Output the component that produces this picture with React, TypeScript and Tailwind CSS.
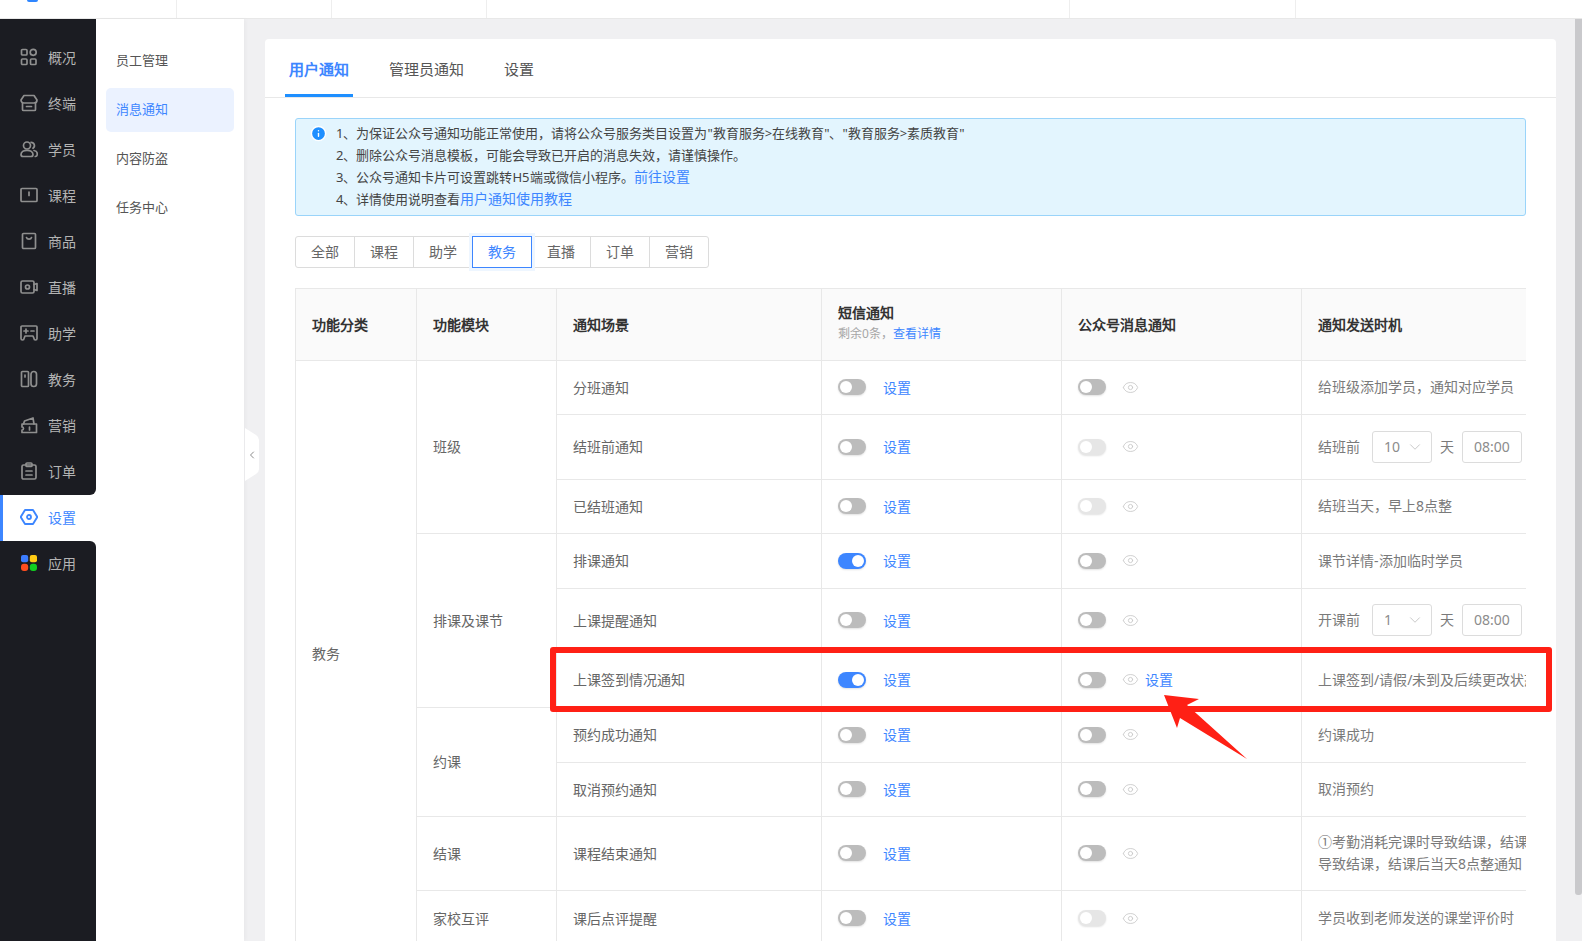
import type { ReactNode } from "react";
import { ChevronDown, ChevronLeft, Eye, Info } from "lucide-react";

const stroke = {
  fill: "none",
  stroke: "#8f8f8f",
  strokeWidth: 1.7,
  strokeLinejoin: "round" as const,
  strokeLinecap: "round" as const,
};

function Glyph({ children }: { children: ReactNode }) {
  return (
    <svg viewBox="0 0 18 18" className="w-[18px] h-[18px] shrink-0">
      {children}
    </svg>
  );
}

const menuTop: { label: string; icon: ReactNode }[] = [
  {
    label: "概况",
    icon: (
      <g {...stroke}>
        <rect x="1.5" y="1.5" width="5.5" height="5.5" rx="1" />
        <circle cx="13.2" cy="4.3" r="3" />
        <rect x="1.5" y="11" width="5.5" height="5.5" rx="1" />
        <rect x="10.5" y="11" width="5.5" height="5.5" rx="1" />
      </g>
    ),
  },
  {
    label: "终端",
    icon: (
      <g {...stroke}>
        <path d="M4 1.5h10l3 4.5c0 1.8-1.2 3-3 3H4C2.200 9 1 7.800 1 6z" />
        <path d="M2.500 9v6.500a1 1 0 0 0 1 1h11a1 1 0 0 0 1-1V9" />
        <path d="M6.500 12.500h5" />
      </g>
    ),
  },
  {
    label: "学员",
    icon: (
      <g {...stroke}>
        <circle cx="7" cy="5.500" r="3.500" />
        <path d="M11 2.300a3.300 3.300 0 0 1 2 6" />
        <path d="M1 14.500c0-2.500 2.500-4.200 6-4.200s6 1.700 6 4.200c0 1.500-.8 2-2 2H3c-1.200 0-2-.5-2-2z" />
        <path d="M14 10.500c2 .3 3.300 1.700 3.300 3.500 0 1.500-.8 2.300-2 2.500" />
      </g>
    ),
  },
  {
    label: "课程",
    icon: (
      <g {...stroke}>
        <path d="M2 2.500h14a1 1 0 0 1 1 1v11a1 1 0 0 1-1 1H2a1 1 0 0 1-1-1v-11a1 1 0 0 1 1-1z" />
        <path d="M9 6v3.500" />
      </g>
    ),
  },
  {
    label: "商品",
    icon: (
      <g {...stroke}>
        <rect x="2.500" y="1.500" width="13" height="15" rx="1" />
        <path d="M6.500 5.500c.6 2.200 4.400 2.200 5 0" />
      </g>
    ),
  },
  {
    label: "直播",
    icon: (
      <g {...stroke}>
        <rect x="1" y="3" width="13" height="12" rx="1.500" />
        <circle cx="7.500" cy="9" r="2" />
        <path d="M14 6.500l3-1v7l-3-1" />
      </g>
    ),
  },
  {
    label: "助学",
    icon: (
      <g {...stroke}>
        <path d="M2 2h14a1 1 0 0 1 1 1v11.500a1.500 1.500 0 0 1-3 0L13 12H5l-1 2.500a1.500 1.500 0 0 1-3 0V3a1 1 0 0 1 1-1z" />
        <path d="M4 7h4M6 5v4M11 7h3" />
      </g>
    ),
  },
  {
    label: "教务",
    icon: (
      <g {...stroke}>
        <rect x="1.500" y="1.500" width="7" height="15" rx="1" />
        <rect x="11" y="1.500" width="5.500" height="15" rx="2.700" />
        <path d="M5 5v2" />
      </g>
    ),
  },
  {
    label: "营销",
    icon: (
      <g {...stroke}>
        <path d="M2 8h14.500v8.500H2V14c1 0 1.500-.7 1.500-1.500S3 11 2 11z" />
        <path d="M3.500 8l1-3 8.500-3 1 6" />
        <path d="M9.500 11v3" />
      </g>
    ),
  },
  {
    label: "订单",
    icon: (
      <g {...stroke}>
        <rect x="2" y="3" width="14" height="14" rx="1.500" />
        <rect x="6" y="1" width="6" height="3.500" rx="1" />
        <path d="M6 9h6M6 13h6" />
      </g>
    ),
  },
];

const subMenu = ["员工管理", "消息通知", "内容防盗", "任务中心"];
const filters = ["全部", "课程", "助学", "教务", "直播", "订单", "营销"];

type Row = {
  scene: string;
  height: string;
  sms?: boolean;
  wx?: "off" | "disabled";
  wxLink?: boolean;
  timing: ReactNode;
  module?: { name: string; span: number };
};

function Delay({ label, days }: { label: string; days: string }) {
  return (
    <div className="flex items-center">
      <span>{label}</span>
      <div className="ml-[12px] flex h-[32px] w-[60px] items-center justify-between rounded-[3px] border border-[#dcdcdc] pl-[11px] pr-[7px] text-[#8c8c8c]">
        {days}
        <ChevronDown size={18} strokeWidth={1} color="#b5b5b5" />
      </div>
      <span className="ml-[8px]">天</span>
      <div className="ml-[8px] flex h-[32px] w-[60px] items-center justify-center rounded-[3px] border border-[#dcdcdc] text-[#8c8c8c]">
        08:00
      </div>
    </div>
  );
}

const rows: Row[] = [
  { scene: "分班通知", height: "h-[54px]", timing: "给班级添加学员，通知对应学员", module: { name: "班级", span: 3 } },
  { scene: "结班前通知", height: "h-[65px]", wx: "disabled", timing: <Delay label="结班前" days="10" /> },
  { scene: "已结班通知", height: "h-[54px]", wx: "disabled", timing: "结班当天，早上8点整" },
  { scene: "排课通知", height: "h-[55px]", sms: true, timing: "课节详情-添加临时学员", module: { name: "排课及课节", span: 3 } },
  { scene: "上课提醒通知", height: "h-[64px]", timing: <Delay label="开课前" days="1" /> },
  { scene: "上课签到情况通知", height: "h-[55px]", sms: true, wxLink: true, timing: "上课签到/请假/未到及后续更改状态时通知" },
  { scene: "预约成功通知", height: "h-[55px]", timing: "约课成功", module: { name: "约课", span: 2 } },
  { scene: "取消预约通知", height: "h-[54px]", timing: "取消预约" },
  {
    scene: "课程结束通知",
    height: "h-[74px]",
    timing: (
      <>
        ①考勤消耗完课时导致结课，结课后当天8点整通知
        <br />
        导致结课，结课后当天8点整通知
      </>
    ),
    module: { name: "结课", span: 1 },
  },
  { scene: "课后点评提醒", height: "h-[56px]", wx: "disabled", timing: "学员收到老师发送的课堂评价时", module: { name: "家校互评", span: 1 } },
];

function Toggle({ on, disabled }: { on?: boolean; disabled?: boolean }) {
  const track = on ? "bg-[#3d86ff] justify-end" : disabled ? "bg-[#e6e6e6]" : "bg-[#bcbcbc]";
  return (
    <span className={`flex h-[16px] w-[28px] shrink-0 items-center rounded-full px-[2px] shadow-[0_1px_2px_rgba(0,0,0,0.12)] ${track}`}>
      <span className="h-[12px] w-[12px] rounded-full bg-white" />
    </span>
  );
}

const cell = "border border-[#e8e8e8] pb-[1px] pl-[16px] align-middle";

export default function App() {
  return (
    <div
      lang="zh-CN"
      className="relative flex h-[941px] w-[1582px] flex-col overflow-hidden bg-white text-[14px] [font-family:'Liberation_Sans','Noto_Sans_CJK_SC',sans-serif]"
    >
      <header className="flex h-[19px] shrink-0 border-b border-[#e8e8e8] bg-white">
        <div className="w-[177px] border-r border-[#eeeeee]">
          <div className="ml-[27px] h-[2px] w-[11px] rounded-b-sm bg-[#2f86ff]" />
        </div>
        <div className="w-[155px] border-r border-[#eeeeee]" />
        <div className="w-[155px] border-r border-[#eeeeee]" />
        <div className="w-[583px] border-r border-[#eeeeee]" />
        <div className="w-[226px] border-r border-[#eeeeee]" />
      </header>

      <div className="flex min-h-0 flex-1">
        <aside className="flex w-[96px] shrink-0 flex-col bg-white">
          <nav className="rounded-br-[6px] bg-[#1b1c22] pb-[1px] pt-[15px]">
            {menuTop.map((m) => (
              <div key={m.label} className="flex h-[46px] items-center gap-[10px] pl-[20px] text-[#b4b4b4]">
                <Glyph>{m.icon}</Glyph>
                {m.label}
              </div>
            ))}
          </nav>
          <div className="flex h-[46px] items-center gap-[10px] border-l-[3px] border-[#3d86ff] pb-[2px] pl-[17px] text-[#3d86ff]">
            <Glyph>
              <path d="M5 2h8l4.300 7-4.300 7H5L.7 9z" fill="none" stroke="#3d86ff" strokeWidth="1.900" strokeLinejoin="round" />
              <circle cx="9" cy="9" r="2" fill="none" stroke="#3d86ff" strokeWidth="1.800" />
            </Glyph>
            设置
          </div>
          <div className="flex-1 rounded-tr-[6px] bg-[#1b1c22]">
            <div className="flex h-[44px] items-center gap-[10px] pl-[20px] text-[#b4b4b4]">
              <Glyph>
                <rect x="1" y="1" width="7.200" height="7.200" rx="2" fill="#3b7cff" />
                <rect x="9.800" y="1" width="7.200" height="7.200" rx="2" fill="#ffcb14" />
                <rect x="1" y="9.800" width="7.200" height="7.200" rx="3" fill="#ff4d1f" />
                <rect x="9.800" y="9.800" width="7.200" height="7.200" rx="3" fill="#10ce20" />
              </Glyph>
              应用
            </div>
          </div>
        </aside>

        <div className="z-10 flex w-[148px] shrink-0 flex-col gap-[5px] bg-white pl-[10px] pr-[10px] pt-[20px] text-[13px] text-[#555555] shadow-[2px_0_4px_rgba(0,0,0,0.03)]">
          {subMenu.map((s) => (
            <div
              key={s}
              className={`flex h-[44px] items-center rounded-[5px] pl-[10px] ${s === "消息通知" ? "bg-[#ebf2ff] text-[#3d86ff]" : ""}`}
            >
              {s}
            </div>
          ))}
        </div>

        <main className="flex min-w-0 flex-1 bg-[#f0f0f2]">
          <div className="min-w-0 flex-1 overflow-hidden pl-[21px] pr-[19px] pt-[20px]">
            <section className="rounded-t-[4px] bg-white">
              <div className="flex h-[59px] gap-[32px] border-b border-[#e8e8e8] pl-[20px] text-[15px] text-[#555555]">
                <div className="flex items-center border-b-[3px] border-[#1e8fff] px-[4px] pt-[5px] font-bold text-[#3d86ff]">用户通知</div>
                <div className="flex items-center px-[4px] pt-[2px]">管理员通知</div>
                <div className="flex items-center px-[4px] pt-[2px]">设置</div>
              </div>

              <div className="px-[30px] pt-[20px]">
                <div className="flex h-[98px] gap-[9px] rounded-[3px] border border-[#9ad4fa] bg-[#e3f5fe] pl-[14px] pt-[3px] text-[13px] leading-[22px] text-[#444444]">
                  <Info size={17} fill="#1e8fff" color="#ffffff" className="mt-[3px] shrink-0" />
                  <div>
                    <p>1、为保证公众号通知功能正常使用，请将公众号服务类目设置为"教育服务&gt;在线教育"、"教育服务&gt;素质教育"</p>
                    <p>2、删除公众号消息模板，可能会导致已开启的消息失效，请谨慎操作。</p>
                    <p>
                      3、公众号通知卡片可设置跳转H5端或微信小程序。<span className="text-[14px] text-[#3d86ff]">前往设置</span>
                    </p>
                    <p>
                      4、详情使用说明查看<span className="text-[14px] text-[#3d86ff]">用户通知使用教程</span>
                    </p>
                  </div>
                </div>

                <div className="mt-[20px] flex h-[32px] w-[414px] rounded-[3px] border border-[#dcdcdc] text-[#666666]">
                  {filters.map((f) => (
                    <div
                      key={f}
                      className={
                        f === "教务"
                          ? "z-10 -my-px flex w-[60px] items-center justify-center border border-[#3d86ff] pb-[2px] text-[#3d86ff] shadow-[0_0_0_3px_#eef6ff]"
                          : "flex flex-1 items-center justify-center border-r border-[#dcdcdc] pb-[2px] last:border-r-0"
                      }
                    >
                      {f}
                    </div>
                  ))}
                </div>

                <div className="mt-[20px] overflow-hidden">
                  <table className="w-[1231px] table-fixed border-collapse text-[#666666]">
                    <colgroup>
                      <col className="w-[121px]" />
                      <col className="w-[140px]" />
                      <col className="w-[265px]" />
                      <col className="w-[240px]" />
                      <col className="w-[240px]" />
                      <col className="w-[225px]" />
                    </colgroup>
                    <thead>
                      <tr className="h-[72px] bg-[#fafafa] text-left text-[#333333]">
                        <th className={`${cell} font-semibold`}>功能分类</th>
                        <th className={`${cell} font-semibold`}>功能模块</th>
                        <th className={`${cell} font-semibold`}>通知场景</th>
                        <th className={`${cell} font-semibold`}>
                          <div className="leading-[20px]">短信通知</div>
                          <div className="text-[12px] font-normal leading-[22px] text-[#a6a6a6]">
                            剩余0条，<span className="text-[#3d86ff]">查看详情</span>
                          </div>
                        </th>
                        <th className={`${cell} font-semibold`}>公众号消息通知</th>
                        <th className={`${cell} font-semibold`}>通知发送时机</th>
                      </tr>
                    </thead>
                    <tbody>
                      {rows.map((r, i) => (
                        <tr key={r.scene} className={r.height}>
                          {i === 0 && (
                            <td rowSpan={rows.length} className={cell}>
                              教务
                            </td>
                          )}
                          {r.module && (
                            <td rowSpan={r.module.span} className={cell}>
                              {r.module.name}
                            </td>
                          )}
                          <td className={cell}>{r.scene}</td>
                          <td className={cell}>
                            <div className="flex items-center gap-[17px]">
                              <Toggle on={r.sms} />
                              <span className="text-[#3d86ff]">设置</span>
                            </div>
                          </td>
                          <td className={cell}>
                            <div className="flex items-center">
                              <Toggle disabled={r.wx === "disabled"} />
                              <Eye size={17} strokeWidth={1.2} color="#c8c8c8" className="ml-[16px]" />
                              {r.wxLink && <span className="ml-[6px] text-[#3d86ff]">设置</span>}
                            </div>
                          </td>
                          <td className={`${cell} overflow-hidden whitespace-nowrap leading-[22px] text-[#7a7a7a]`}>{r.timing}</td>
                        </tr>
                      ))}
                    </tbody>
                  </table>
                </div>
              </div>
            </section>
          </div>
          <div className="w-[7px] shrink-0">
            <div className="h-[876px] rounded-b-[3px] bg-[#c9c9cc]" />
          </div>
        </main>
      </div>

      {/* collapse handle */}
      <div className="absolute left-[245px] top-[428px] z-20 flex h-[53px] w-[14px] items-center justify-center">
        <svg viewBox="0 0 14 53" className="absolute inset-0 h-full w-full">
          <path d="M0 0l11 7q3 2 3 5v29q0 3-3 5L0 53z" fill="#ffffff" />
        </svg>
        <ChevronLeft size={12} color="#8c8c8c" className="relative" />
      </div>

      {/* annotation on top of the screenshot */}
      <div className="absolute left-[550px] top-[647px] z-30 h-[65px] w-[1002px] rounded-[3px] border-[6px] border-[#ff2015]" />
      <svg className="absolute left-[1160px] top-[690px] z-30 h-[75px] w-[92px]" viewBox="1160 690 92 75">
        <polygon points="1164,695 1199,699 1187,705 1247,759 1180,718 1177,728" fill="#ff2015" />
      </svg>
    </div>
  );
}
